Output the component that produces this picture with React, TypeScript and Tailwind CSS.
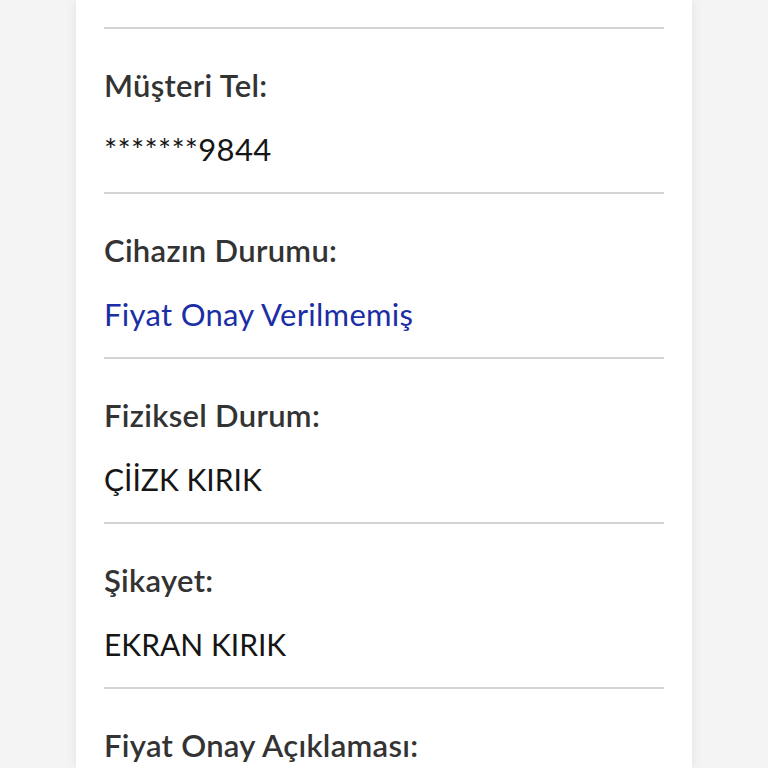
import React from 'react';

const rows = [
  { label: 'Müşteri Tel:', value: '*******9844' },
  { label: 'Cihazın Durumu:', value: 'Fiyat Onay Verilmemiş', blue: true },
  { label: 'Fiziksel Durum:', value: 'ÇİİZK KIRIK', caps: true },
  { label: 'Şikayet:', value: 'EKRAN KIRIK', caps: true },
];

export default function App() {
  return (
    <div className="h-[768px] overflow-hidden bg-[#f4f4f4] font-['Lato','Noto_Sans',sans-serif] tracking-[0.3px]">
      <div className="mx-[76px] h-full bg-white px-[28px] pt-[27px] shadow-[0_0_12px_rgba(0,0,0,0.08)]">
        {rows.map((r) => (
          <div key={r.label} className="border-t-2 border-[#d4d4d4] pt-[36px] pb-[23px]">
            <div className="text-[31px] leading-[40px] font-semibold text-[#333333]">{r.label}</div>
            <div
              className={
                'mt-[24px] leading-[40px] ' +
                (r.caps ? 'text-[30px] tracking-normal ' : 'text-[31px] ') +
                (r.blue ? 'text-[#1b2ea6]' : 'text-[#161616]')
              }
            >
              {r.value}
            </div>
          </div>
        ))}
        <div className="border-t-2 border-[#d4d4d4] pt-[36px]">
          <div className="text-[31px] leading-[40px] font-semibold text-[#333333]">Fiyat Onay Açıklaması:</div>
        </div>
      </div>
    </div>
  );
}
